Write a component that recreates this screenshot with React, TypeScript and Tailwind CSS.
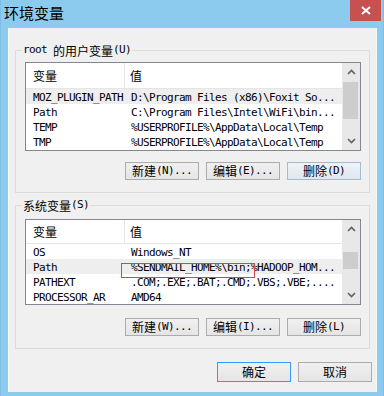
import React from "react";

const CJK = /[\u3000-\u9fff\uff00-\uffef]/;

function Mix({ text }: { text: string }) {
  const parts: { s: string; c: boolean }[] = [];
  for (const ch of text) {
    const c = CJK.test(ch);
    const last = parts[parts.length - 1];
    if (last && last.c === c) last.s += ch;
    else parts.push({ s: ch, c });
  }
  return (
    <>
      {parts.map((p, i) =>
        p.c ? (
          <span key={i} className="text-[12px] font-['Noto_Sans_CJK_SC',sans-serif]">
            {p.s}
          </span>
        ) : (
          <span key={i} className="text-[11px] tracking-[-0.62px] font-['DejaVu_Sans_Mono',monospace]">
            {p.s}
          </span>
        )
      )}
    </>
  );
}

function Chevron({ up }: { up: boolean }) {
  return (
    <svg width="9" height="6" viewBox="0 0 9 6">
      <path
        d={up ? "M1 5 L4.5 1.5 L8 5" : "M1 1 L4.5 4.5 L8 1"}
        stroke="#606060"
        strokeWidth="1.6"
        fill="none"
      />
    </svg>
  );
}

type Row = [string, string];

function ListBox({
  rows,
  height,
  headerH,
  selected,
  thumbTop,
  thumbH,
  children,
}: {
  rows: Row[];
  height: number;
  headerH: number;
  selected: number;
  thumbTop: number;
  thumbH: number;
  children?: React.ReactNode;
}) {
  return (
    <div
      className="relative ml-[9px] w-[336px] border border-[#828790] bg-white flex overflow-hidden"
      style={{ height }}
    >
      <div className="flex-1 flex flex-col overflow-hidden">
        <div className="flex shrink-0 border-b border-[#e5e5e5]" style={{ height: headerH }}>
          <div className="w-[99px] pl-[7px] flex items-center border-r border-[#e3e8f0]">
            <Mix text="变量" />
          </div>
          <div className="flex-1 pl-[5px] flex items-center">
            <Mix text="值" />
          </div>
        </div>
        {rows.map((r, i) => (
          <div
            key={i}
            className={
              "flex h-[15px] shrink-0 items-center whitespace-pre leading-[15px] text-black " +
              (i === selected ? "bg-[#eeeeee]" : "")
            }
          >
            <div className="w-[99px] pl-[7px] overflow-hidden">
              <Mix text={r[0]} />
            </div>
            <div className="flex-1 pl-[6px] overflow-hidden">
              <Mix text={r[1]} />
            </div>
          </div>
        ))}
      </div>
      <div className="w-[18px] bg-[#e8e8e8] relative flex flex-col items-center justify-between py-[6px]">
        <Chevron up />
        <Chevron up={false} />
        <div
          className="absolute left-[1px] w-[15px] bg-[#cdcdcd]"
          style={{ top: thumbTop, height: thumbH }}
        />
      </div>
      {children}
    </div>
  );
}

function Btn({ label, variant }: { label: string; variant?: "hot" | "def" }) {
  const cls =
    variant === "hot"
      ? "border-[#a6b9cf] bg-gradient-to-b from-[#eef3f8] to-[#dfe7ef]"
      : variant === "def"
      ? "border-[#3399ff] bg-gradient-to-b from-[#f0f0f0] to-[#e5e5e5]"
      : "border-[#acacac] bg-gradient-to-b from-[#f0f0f0] to-[#e5e5e5]";
  return (
    <div
      className={
        "w-[74px] h-full border flex items-center justify-center whitespace-pre text-black " + cls
      }
    >
      <Mix text={label} />
    </div>
  );
}

function Group({
  title,
  h,
  mt,
  children,
}: {
  title: string;
  h: number;
  mt: number;
  children: React.ReactNode;
}) {
  return (
    <div
      className="relative mx-[6px] border border-[#dcdcdc] flex flex-col"
      style={{ height: h, marginTop: mt }}
    >
      <div className="absolute left-[6px] top-[-9px] bg-[#f0f0f0] px-[1px] h-[17px] flex items-center whitespace-pre text-black">
        <Mix text={title} />
      </div>
      {children}
    </div>
  );
}

export default function App() {
  const user: Row[] = [
    ["MOZ_PLUGIN_PATH", "D:\\Program Files (x86)\\Foxit So..."],
    ["Path", "C:\\Program Files\\Intel\\WiFi\\bin..."],
    ["TEMP", "%USERPROFILE%\\AppData\\Local\\Temp"],
    ["TMP", "%USERPROFILE%\\AppData\\Local\\Temp"],
  ];
  const sys: Row[] = [
    ["OS", "Windows_NT"],
    ["Path", "%SENDMAIL_HOME%\\bin;%HADOOP_HOM..."],
    ["PATHEXT", ".COM;.EXE;.BAT;.CMD;.VBS;.VBE;...."],
    ["PROCESSOR_AR", "AMD64"],
  ];
  return (
    <div className="w-[384px] h-[396px] bg-[#8ccbee] flex flex-col overflow-hidden border-l border-r border-[#7dbde6]">
      <div className="h-[28px] shrink-0 relative">
        <div className="pl-[3px] pt-[3px] text-[15px] leading-[20px] text-black font-['Noto_Sans_CJK_SC',sans-serif]">
          环境变量
        </div>
        <div className="absolute right-[2px] top-0 w-[31px] h-[21px] bg-[#c75050] flex items-center justify-center">
          <svg width="10" height="9" viewBox="0 0 10 9">
            <path d="M1 1 L9 8 M9 1 L1 8" stroke="white" strokeWidth="2" />
          </svg>
        </div>
      </div>
      <div className="ml-[7px] mr-[6px] h-[364px] shrink-0 bg-[#f0f0f0] border-l border-r border-[#f7f7f7] flex flex-col">
        <Group title="root 的用户变量(U)" h={143} mt={22}>
          <div className="h-[11px] shrink-0" />
          <ListBox rows={user} height={89} headerH={26} selected={0} thumbTop={19} thumbH={37} />
          <div className="mt-[11px] h-[18px] flex gap-[7px] pl-[109px]">
            <Btn label="新建(N)..." />
            <Btn label="编辑(E)..." />
            <Btn label="删除(D)" variant="hot" />
          </div>
        </Group>
        <Group title="系统变量(S)" h={144} mt={12}>
          <div className="h-[13px] shrink-0" />
          <ListBox rows={sys} height={86} headerH={24} selected={1} thumbTop={32} thumbH={17}>
            <div className="absolute left-[95px] top-[43px] w-[134px] h-[15px] border border-[#e04343]" />
          </ListBox>
          <div className="mt-[13px] h-[18px] flex gap-[7px] pl-[109px]">
            <Btn label="新建(W)..." />
            <Btn label="编辑(I)..." />
            <Btn label="删除(L)" />
          </div>
        </Group>
        <div className="mt-[13px] h-[20px] flex gap-[7px] pl-[208px]">
          <Btn label="确定" variant="def" />
          <Btn label="取消" />
        </div>
      </div>
    </div>
  );
}
